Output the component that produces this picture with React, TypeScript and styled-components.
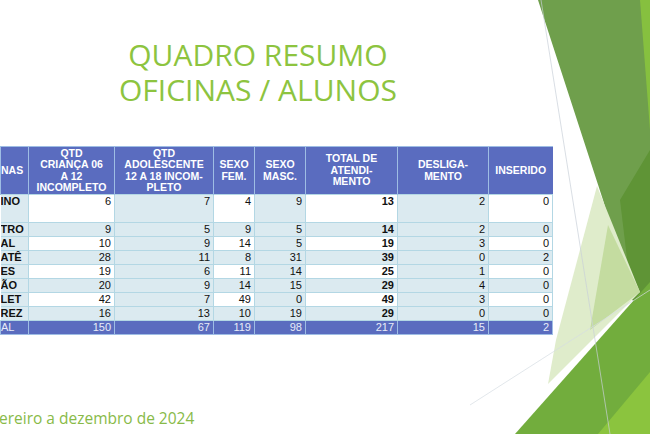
import React from "react";
import styled, { createGlobalStyle } from "styled-components";

const GlobalStyle = createGlobalStyle`
  html, body { margin: 0; padding: 0; background: #ffffff; }
  #root { width: 650px; height: 434px; }
`;

const Slide = styled.div`
  position: relative;
  width: 650px;
  height: 434px;
  overflow: hidden;
  background: #ffffff;
  font-family: "Liberation Sans", Arial, sans-serif;
`;

const Decor = styled.svg`
  position: absolute;
  inset: 0;
  width: 650px;
  height: 434px;
  z-index: 0;
`;

const Content = styled.div`
  position: relative;
  z-index: 1;
  height: 434px;
  display: flex;
  flex-direction: column;
`;

const Title = styled.h1`
  margin: 37px 0 0 0;
  width: 516px;
  display: flex;
  flex-direction: column;
  align-items: center;
  font-family: "Open Sans", sans-serif;
  font-weight: 400;
  font-size: 30px;
  color: #8dc43f;
`;

const TitleLine = styled.span`
  display: block;
  height: 35px;
  line-height: 35px;
`;

const TableWrap = styled.div`
  margin-top: 39px;
`;

const Table = styled.table`
  border-collapse: collapse;
  table-layout: fixed;
  width: 552px;
`;

const Col = styled.col<{ $w: number }>`
  width: ${(p) => p.$w}px;
`;

const HeadRow = styled.tr`
  height: 48px;
`;

const HeadCell = styled.th<{ $pr?: number }>`
  background: #5a6cbf;
  color: #ffffff;
  font-size: 10.5px;
  line-height: 11.5px;
  font-weight: 700;
  text-align: ${(p) => (p.$pr !== undefined ? "right" : "center")};
  padding: 0 ${(p) => p.$pr ?? 0}px 0 0;
  vertical-align: middle;
  border-left: 1px solid #9ebde4;
  border-top: 1px solid #9ebde4;
  white-space: nowrap;
  overflow: hidden;
`;

const Row = styled.tr<{ $h: number }>`
  height: ${(p) => p.$h}px;
`;

const Cell = styled.td<{ $bg: string; $bold?: boolean; $top?: boolean }>`
  background: ${(p) => p.$bg};
  color: #111111;
  font-size: 11px;
  line-height: 13px;
  font-weight: ${(p) => (p.$bold ? 700 : 400)};
  text-align: right;
  vertical-align: ${(p) => (p.$top ? "top" : "middle")};
  padding: 0 3px 0 0;
  border: 1px solid #b3d7e4;
  white-space: nowrap;
  overflow: hidden;
`;

const NameCell = styled.td<{ $pr: number; $top?: boolean }>`
  background: #dbeaf0;
  color: #111111;
  font-size: 11px;
  line-height: 13px;
  font-weight: 700;
  text-align: right;
  vertical-align: ${(p) => (p.$top ? "top" : "middle")};
  padding: 0 ${(p) => p.$pr}px 0 0;
  border: 1px solid #b3d7e4;
  border-left: none;
  white-space: nowrap;
  overflow: hidden;
`;

const TotalCell = styled.td<{ $pr?: number }>`
  background: #5a6cbf;
  color: #e8ebf8;
  font-size: 11px;
  line-height: 13px;
  font-weight: 400;
  text-align: right;
  padding: 0 ${(p) => p.$pr ?? 3}px 0 0;
  border: 1px solid #9ebde4;
  white-space: nowrap;
  overflow: hidden;
`;

const Footer = styled.div`
  margin-top: auto;
  margin-bottom: 6px;
  margin-left: -1px;
  font-family: "Open Sans", sans-serif;
  font-size: 15.5px;
  line-height: 20px;
  color: #88ba48;
`;

const WHITE = "#ffffff";
const BLUE = "#dbeaf0";

const widths = [28, 86, 99, 41, 51, 92, 91, 64];

type DataRow = { name: string; pr: number; vals: number[] };

const rows: DataRow[] = [
  { name: "INO", pr: 8, vals: [6, 7, 4, 9, 13, 2, 0] },
  { name: "TRO", pr: 8, vals: [9, 5, 9, 5, 14, 2, 0] },
  { name: "AL", pr: 14, vals: [10, 9, 14, 5, 19, 3, 0] },
  { name: "ATÊ", pr: 7, vals: [28, 11, 8, 31, 39, 0, 2] },
  { name: "ES", pr: 16, vals: [19, 6, 11, 14, 25, 1, 0] },
  { name: "ÃO", pr: 11, vals: [20, 9, 14, 15, 29, 4, 0] },
  { name: "LET", pr: 10, vals: [42, 7, 49, 0, 49, 3, 0] },
  { name: "REZ", pr: 8, vals: [16, 13, 10, 19, 29, 0, 0] },
];

const totals = [150, 67, 119, 98, 217, 15, 2];

const headers: React.ReactNode[] = [
  <>QTD<br />CRIANÇA 06<br />A 12<br />INCOMPLETO</>,
  <>QTD<br />ADOLESCENTE<br />12 A 18 INCOM-<br />PLETO</>,
  <>SEXO<br />FEM.</>,
  <>SEXO<br />MASC.</>,
  <>TOTAL DE<br />ATENDI-<br />MENTO</>,
  <>DESLIGA-<br />MENTO</>,
  <>INSERIDO</>,
];

const cellBg = (r: number, c: number) => (r % 2 === 0 && c % 2 === 0 ? WHITE : BLUE);

export default function App() {
  return (
    <>
      <GlobalStyle />
      <Slide>
        <Decor viewBox="0 0 650 434">
          <polygon points="538,0 650,0 650,300 632,300 603,200" fill="#6f9f4c" />
          <polygon points="640,0 650,0 650,130" fill="#86c03f" />
          <polygon points="620,200 650,150 650,310 632,300" fill="#5f9436" />
          <polygon points="597,186 640,292 548,384 556,340" fill="#dfeccb" />
          <polygon points="608,225 640,292 590,330" fill="#c4dca0" />
          <polygon points="515,434 650,282 650,434" fill="#72ad3d" />
          <polygon points="598,434 650,372 650,434" fill="#8bc43e" />
          <line x1="541" y1="0" x2="610" y2="434" stroke="#c9d0d8" strokeWidth="0.7" />
          <line x1="470" y1="405" x2="650" y2="290" stroke="#d6dce2" strokeWidth="0.7" />
        </Decor>
        <Content>
          <Title>
            <TitleLine>QUADRO RESUMO</TitleLine>
            <TitleLine>OFICINAS / ALUNOS</TitleLine>
          </Title>
          <TableWrap>
            <Table>
              <colgroup>
                {widths.map((w, i) => (
                  <Col key={i} $w={w} />
                ))}
              </colgroup>
              <thead>
                <HeadRow>
                  <HeadCell $pr={5}>NAS</HeadCell>
                  {headers.map((h, i) => (
                    <HeadCell key={i}>{h}</HeadCell>
                  ))}
                </HeadRow>
              </thead>
              <tbody>
                {rows.map((row, r) => (
                  <Row key={row.name} $h={r === 0 ? 28 : 14}>
                    <NameCell $pr={row.pr} $top={r === 0}>
                      {row.name}
                    </NameCell>
                    {row.vals.map((v, c) => (
                      <Cell key={c} $bg={cellBg(r, c)} $bold={c === 4} $top={r === 0}>
                        {v}
                      </Cell>
                    ))}
                  </Row>
                ))}
                <Row $h={14}>
                  <TotalCell $pr={18}>AL</TotalCell>
                  {totals.map((t, i) => (
                    <TotalCell key={i}>{t}</TotalCell>
                  ))}
                </Row>
              </tbody>
            </Table>
          </TableWrap>
          <Footer>ereiro a dezembro de 2024</Footer>
        </Content>
      </Slide>
    </>
  );
}
